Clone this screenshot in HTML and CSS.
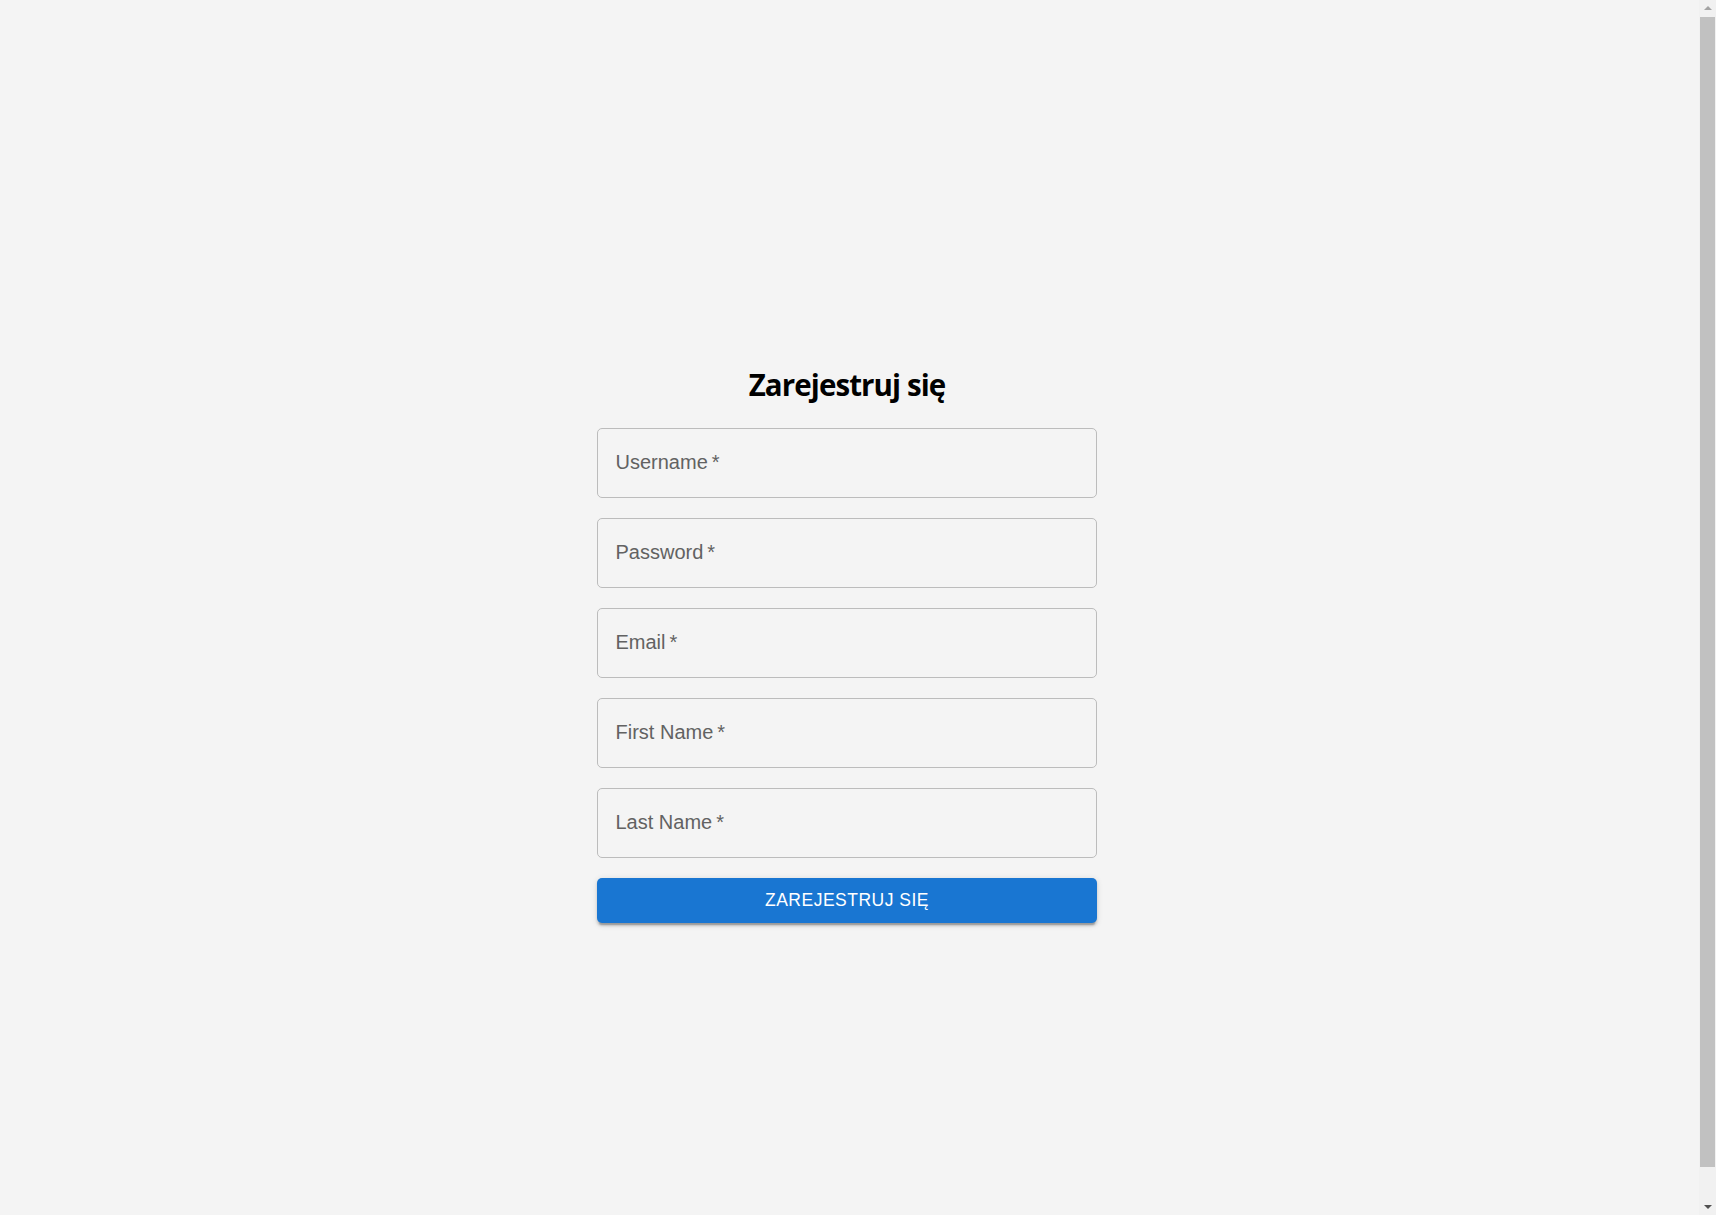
FILE: index.html
```html
<!DOCTYPE html>
<html lang="pl">
<head>
<meta charset="utf-8">
<title>Zarejestruj się</title>
<link rel="stylesheet" href="styles.css">
</head>
<body>
<main class="page">
  <form class="register">
    <h2 class="title">Zarejestruj się</h2>
    <input class="field" type="text" placeholder="Username&thinsp;*">
    <input class="field" type="password" placeholder="Password&thinsp;*">
    <input class="field" type="email" placeholder="Email&thinsp;*">
    <input class="field" type="text" placeholder="First Name&thinsp;*">
    <input class="field" type="text" placeholder="Last Name&thinsp;*">
    <button class="submit" type="button">Zarejestruj się</button>
  </form>
</main>
<div class="scrollbar" aria-hidden="true">
  <span class="arrow arrow-up"></span>
  <span class="thumb"></span>
  <span class="arrow arrow-down"></span>
</div>
</body>
</html>
```

FILE: styles.css
```css
html, body {
  margin: 0;
  padding: 0;
  background: #f4f4f4;
}

.page {
  box-sizing: border-box;
  min-height: 1215px;
  padding: 365px 22px 300px 0;
  display: flex;
  justify-content: center;
}

.register {
  width: 500px;
  display: flex;
  flex-direction: column;
  gap: 20px;
}

.title {
  margin: 0 0 3px;
  font-family: "Open Sans", "DejaVu Sans", sans-serif;
  font-weight: 700;
  font-size: 29.5px;
  letter-spacing: -0.9px;
  line-height: 40px;
  text-align: center;
  color: #000;
}

.field {
  box-sizing: border-box;
  width: 100%;
  height: 70px;
  margin: 0;
  padding: 0 17.5px 1px;
  border: 1px solid #bcbcbc;
  border-radius: 5px;
  background: transparent;
  font-family: "Liberation Sans", Arial, sans-serif;
  font-size: 20px;
  line-height: 23px;
  color: #222;
  outline: none;
}

.field::placeholder {
  color: #626262;
  opacity: 1;
}

.submit {
  box-sizing: border-box;
  width: 100%;
  height: 45px;
  margin: 0;
  padding: 0;
  border: none;
  border-radius: 5px;
  background: #1976d2;
  color: #fff;
  font-family: "Liberation Sans", Arial, sans-serif;
  font-size: 17.5px;
  letter-spacing: 0.5px;
  text-transform: uppercase;
  box-shadow: 0 3.75px 1.25px -2.5px rgba(0,0,0,0.2), 0 2.5px 2.5px 0 rgba(0,0,0,0.14), 0 1.25px 6.25px 0 rgba(0,0,0,0.12);
  cursor: pointer;
}

/* window scrollbar drawn over the right edge */
.scrollbar {
  position: fixed;
  top: 0;
  right: 0;
  width: 17px;
  height: 100%;
  background: #f1f1f1;
  display: flex;
  flex-direction: column;
  align-items: center;
}

.arrow {
  width: 0;
  height: 0;
  box-sizing: border-box;
}

.arrow-up {
  border-left: 4px solid transparent;
  border-right: 4px solid transparent;
  border-bottom: 4px solid #a3a3a3;
  margin: 6px 0 7px;
}

.arrow-down {
  border-left: 4px solid transparent;
  border-right: 4px solid transparent;
  border-top: 4px solid #505050;
  margin: auto 0 6px;
}

.thumb {
  width: 15px;
  height: 1150px;
  background: #c1c1c1;
}
```
